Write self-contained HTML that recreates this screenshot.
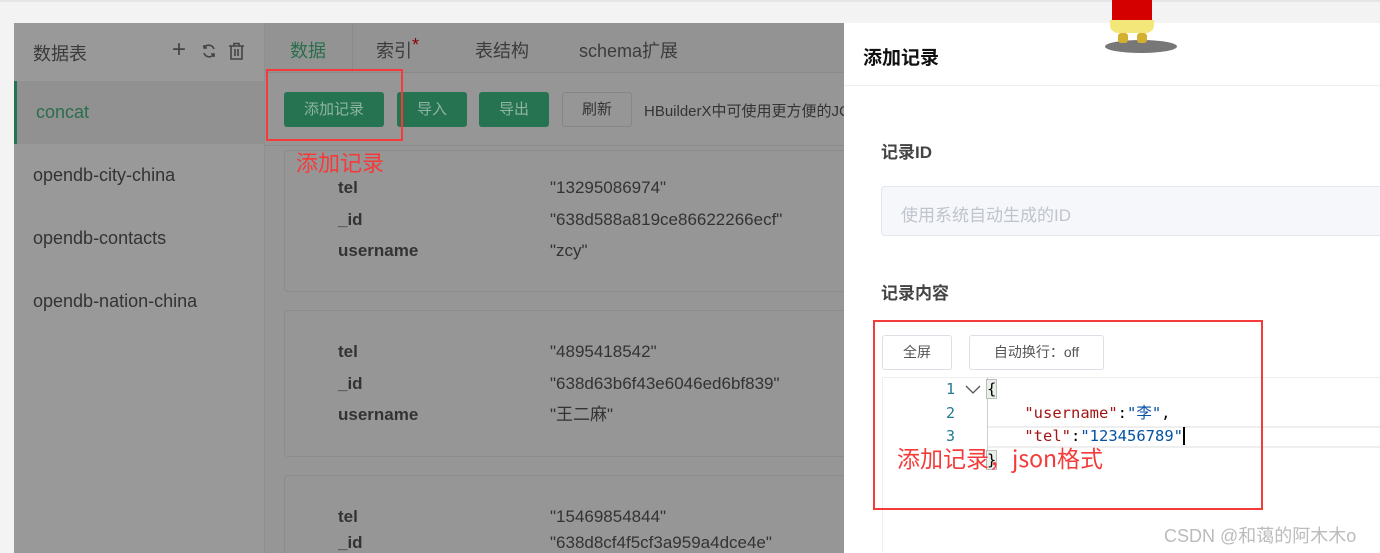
<!DOCTYPE html>
<html style="width:1380px;height:553px;overflow:hidden"><head><meta charset="utf-8"><style>
*{margin:0;padding:0;box-sizing:border-box}
body{width:1380px;height:553px;overflow:hidden;background:#f3f3f3;font-family:"Liberation Sans","Noto Sans CJK SC",sans-serif;position:relative}
#root{position:absolute;left:0;top:0;width:1380px;height:553px;overflow:hidden}
.a{position:absolute}
.t{position:absolute;white-space:nowrap}
</style></head><body><div id="root">
<div class="a" style="left:0;top:0;width:1380px;height:2px;background:#e6e6e6"></div>
<div class="a" style="left:14px;top:23px;width:250px;height:530px;background:#999"></div>
<div class="a" style="left:264px;top:23px;width:1px;height:530px;background:#8f8f8f"></div>
<div class="t" style="left:33px;top:40px;font-size:18px;color:#3a3a3a">数据表</div>
<div class="t" style="left:172px;top:36px;font-size:24px;color:#444;font-weight:300">+</div>
<svg class="a" style="left:201px;top:43px" width="16" height="16" viewBox="0 0 16 16" fill="none" stroke="#444" stroke-width="1.6"><path d="M13 6A5.5 5.5 0 0 0 3 5M3 10a5.5 5.5 0 0 0 10 1"/><path d="M3 2v3h3M13 14v-3h-3"/></svg>
<svg class="a" style="left:228px;top:42px" width="17" height="18" viewBox="0 0 17 18" fill="none" stroke="#444" stroke-width="1.6"><path d="M1 4h15M6 4V1.5h5V4M3 4v13h11V4M7 7v7M10 7v7"/></svg>
<div class="a" style="left:14px;top:81px;width:250px;height:63px;background:#919191"></div>
<div class="a" style="left:14px;top:81px;width:3px;height:63px;background:#267352"></div>
<div class="t" style="left:36px;top:102px;font-size:18px;color:#2a6e4d">concat</div>
<div class="t" style="left:33px;top:165px;font-size:18px;color:#333">opendb-city-china</div>
<div class="t" style="left:33px;top:228px;font-size:18px;color:#333">opendb-contacts</div>
<div class="t" style="left:33px;top:291px;font-size:18px;color:#333">opendb-nation-china</div>
<div class="a" style="left:265px;top:23px;width:579px;height:530px;background:#969696;overflow:hidden">
<div class="a" style="left:0;top:0;width:579px;height:50px;background:#939393;border-bottom:1px solid #8a8a8a"></div>
<div class="a" style="left:87px;top:0;width:1px;height:50px;background:#8a8a8a"></div>
<div class="a" style="left:0;top:122px;width:579px;height:1px;background:#8a8a8a"></div>
<div class="a" style="left:19px;top:127px;width:560px;height:142px;border:1px solid #8c8c8c;border-right:none;border-radius:4px 0 0 4px"></div>
<div class="a" style="left:19px;top:287px;width:560px;height:147px;border:1px solid #8c8c8c;border-right:none;border-radius:4px 0 0 4px"></div>
<div class="a" style="left:19px;top:452px;width:560px;height:78px;border-top:1px solid #8c8c8c;border-left:1px solid #8c8c8c;border-radius:4px 0 0 0"></div>
</div>
<div class="t" style="left:290px;top:37px;font-size:18px;color:#2a6e4d">数据</div>
<div class="t" style="left:376px;top:37px;font-size:18px;color:#3c3c3c">索引<span style="color:#8b0000;font-size:18px;position:relative;top:-6px">*</span></div>
<div class="t" style="left:475px;top:37px;font-size:18px;color:#3c3c3c">表结构</div>
<div class="t" style="left:579px;top:37px;font-size:18px;color:#3c3c3c">schema扩展</div>
<div class="a" style="left:284px;top:92px;width:100px;height:35px;background:#267352;border-radius:3px;color:#8fb5a2;font-size:15px;text-align:center;line-height:35px">添加记录</div>
<div class="a" style="left:397px;top:92px;width:70px;height:35px;background:#267352;border-radius:3px;color:#8fb5a2;font-size:15px;text-align:center;line-height:35px">导入</div>
<div class="a" style="left:479px;top:92px;width:70px;height:35px;background:#267352;border-radius:3px;color:#8fb5a2;font-size:15px;text-align:center;line-height:35px">导出</div>
<div class="a" style="left:562px;top:92px;width:70px;height:35px;border:1px solid #868686;border-radius:3px;color:#333;font-size:15px;text-align:center;line-height:33px">刷新</div>
<div class="t" style="left:644px;top:100px;font-size:15px;color:#333">HBuilderX中可使用更方便的JC</div>
<div class="a" style="left:266px;top:69px;width:137px;height:72px;border:2px solid #f53a3a"></div>
<div class="t" style="left:296px;top:146px;font-size:22px;color:#f53a3a;font-family:'Noto Sans CJK SC',sans-serif">添加记录</div>
<div style="position:absolute;left:338px;top:172px;font-size:17px;color:#333;line-height:31.5px;font-weight:bold">tel<br>_id<br>username</div>
<div style="position:absolute;left:550px;top:172px;font-size:17px;color:#333;line-height:31.5px">"13295086974"<br>"638d588a819ce86622266ecf"<br>"zcy"</div>
<div style="position:absolute;left:338px;top:336px;font-size:17px;color:#333;line-height:31.5px;font-weight:bold">tel<br>_id<br>username</div>
<div style="position:absolute;left:550px;top:336px;font-size:17px;color:#333;line-height:31.5px">"4895418542"<br>"638d63b6f43e6046ed6bf839"<br>"王二麻"</div>
<div style="position:absolute;left:338px;top:501px;width:500px;height:52px;overflow:hidden;font-size:17px;color:#333;line-height:31.5px"><b style="position:absolute;left:0;top:0;line-height:31.5px">tel</b><b style="position:absolute;left:0;top:31px;line-height:21px;height:21px">_id</b><span style="position:absolute;left:212px;top:0;white-space:nowrap">"15469854844"</span><span style="position:absolute;left:212px;top:31px;line-height:21px;height:21px;white-space:nowrap">"638d8cf4f5cf3a959a4dce4e"</span></div>
<div class="a" style="left:844px;top:23px;width:536px;height:530px;background:#fff"></div>
<div class="a" style="left:844px;top:85px;width:536px;height:1px;background:#eee"></div>
<div class="t" style="left:863px;top:43px;font-size:19px;font-weight:bold;color:#111">添加记录</div>
<div class="a" style="left:1105px;top:40px;width:72px;height:13px;border-radius:50%;background:#777"></div>
<div class="a" style="left:1112px;top:0;width:40px;height:22px;background:#d40000"></div>
<div class="a" style="left:1110px;top:20px;width:44px;height:13px;background:#f4e77a;border-radius:0 0 8px 8px"></div>
<div class="a" style="left:1118px;top:33px;width:10px;height:10px;background:#d4b030;border-radius:3px"></div>
<div class="a" style="left:1137px;top:33px;width:10px;height:10px;background:#d4b030;border-radius:3px"></div>
<div class="t" style="left:881px;top:138px;font-size:17px;font-weight:bold;color:#444">记录ID</div>
<div class="a" style="left:881px;top:186px;width:499px;height:50px;background:#f5f7fa;border:1px solid #e4e7ed;border-right:none;border-radius:4px 0 0 4px"></div>
<div class="t" style="left:901px;top:201px;font-size:17px;color:#c0c4cc">使用系统自动生成的ID</div>
<div class="t" style="left:881px;top:279px;font-size:17px;font-weight:bold;color:#444">记录内容</div>
<div class="a" style="left:882px;top:335px;width:70px;height:35px;border:1px solid #dcdfe6;border-radius:3px;font-size:14px;color:#555;text-align:center;line-height:33px">全屏</div>
<div class="a" style="left:969px;top:335px;width:135px;height:35px;border:1px solid #dcdfe6;border-radius:3px;font-size:14px;color:#555;text-align:center;line-height:33px">自动换行：off</div>
<div class="a" style="left:882px;top:377px;width:498px;height:1px;background:#eee"></div>
<div class="a" style="left:882px;top:377px;width:1px;height:176px;background:#eee"></div>
<div class="a" style="left:987px;top:426px;width:393px;height:22px;border-top:2px solid #eee;border-bottom:2px solid #eee"></div>
<div class="a" style="left:987px;top:377px;width:1px;height:85px;background:#ccc"></div>
<div style="position:absolute;left:930px;top:378px;font-family:'DejaVu Sans Mono',monospace;font-size:15px;line-height:23.5px;color:#237893;text-align:right;width:25px">1<br>2<br>3</div>
<svg class="a" style="left:965px;top:385px" width="16" height="10"><path d="M1 1l7 7 7-7" fill="none" stroke="#555" stroke-width="1.3"/></svg>
<div style="position:absolute;left:987px;top:378px;font-family:'DejaVu Sans Mono','Noto Sans CJK SC',monospace;font-size:15.5px;line-height:23.5px;color:#000;white-space:pre"><span style="background:#e8f0e8;outline:1px solid #bbb">{</span>
    <span style="color:#a31515">"username"</span>:<span style="color:#0451a5">"李"</span>,
    <span style="color:#a31515">"tel"</span>:<span style="color:#0451a5">"123456789"</span><span style="border-left:2px solid #000"></span>
<span style="background:#e8f0e8;outline:1px solid #bbb">}</span></div>
<div class="a" style="left:873px;top:320px;width:390px;height:190px;border:2px solid #f53a3a"></div>
<div class="t" style="left:897px;top:440px;font-size:23px;color:#f53a3a;font-family:'Noto Sans CJK SC',sans-serif">添加记录，json格式</div>
<div class="t" style="left:1164px;top:524px;font-size:18px;line-height:24px;color:#bbb">CSDN @和蔼的阿木木o</div>
</div></body></html>
